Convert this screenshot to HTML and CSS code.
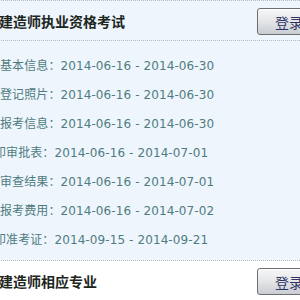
FILE: index.html
```html
<!DOCTYPE html>
<html lang="zh-CN">
<head>
    <meta charset="UTF-8">
    <meta name="viewport" content="width=device-width, initial-scale=1.0">
    <title>报名入口</title>
    <link rel="stylesheet" href="styles.css">
</head>
<body>
    <div class="exam-list">
        <div class="exam-item active">
            <div class="exam-head">
                <div class="exam-title">一级建造师执业资格考试</div>
                <button class="login-btn">登录</button>
            </div>
            <ul class="schedule">
                <li>填写基本信息：2014-06-16 - 2014-06-30</li>
                <li>上传登记照片：2014-06-16 - 2014-06-30</li>
                <li>填写报考信息：2014-06-16 - 2014-06-30</li>
                <li>打印审批表：2014-06-16 - 2014-07-01</li>
                <li>资格审查结果：2014-06-16 - 2014-07-01</li>
                <li>缴纳报考费用：2014-06-16 - 2014-07-02</li>
                <li>打印准考证：2014-09-15 - 2014-09-21</li>
            </ul>
        </div>
        <div class="exam-item">
            <div class="exam-head">
                <div class="exam-title">一级建造师相应专业</div>
                <button class="login-btn">登录</button>
            </div>
        </div>
    </div>
</body>
</html>
```

FILE: styles.css
```css
body {
    margin: 0;
    background: #fff;
    font-family: "DejaVu Sans", "Noto Sans CJK SC", sans-serif;
    overflow: hidden;
}

.exam-list {
    margin-left: -30px;
    width: 360px;
}

.exam-item {
    border-top: 1px dotted #b4b8bc;
}

.exam-item.active {
    background: #eef5fd;
}

.exam-head {
    display: flex;
    align-items: center;
    justify-content: space-between;
    height: 39px;
    padding: 0 9px 0 1px;
    border-bottom: 1px dotted #b4b8bc;
}

.exam-item:last-child .exam-head {
    border-bottom: none;
}

.exam-title {
    font-family: "Noto Sans CJK SC", sans-serif;
    font-size: 14px;
    font-weight: bold;
    color: #1c261c;
}

.login-btn {
    width: 64px;
    height: 27px;
    margin-top: 2px;
    padding: 0;
    border: 1px solid #6a6e72;
    border-radius: 3px;
    background: linear-gradient(to bottom, #f6f7f8 0%, #e6e8ea 45%, #c9cdd1 100%);
    box-shadow: inset 0 1px 0 #fff;
    font-family: "Noto Sans CJK SC", sans-serif;
    font-size: 14px;
    color: #2e3366;
    cursor: pointer;
}

.schedule {
    list-style: none;
    margin: 0;
    padding: 11px 0 5px;
    width: 250px;
    text-align: center;
}

.schedule li {
    line-height: 29px;
    font-size: 12px;
    letter-spacing: 0.1px;
    color: #4e7c80;
    white-space: nowrap;
}
```
